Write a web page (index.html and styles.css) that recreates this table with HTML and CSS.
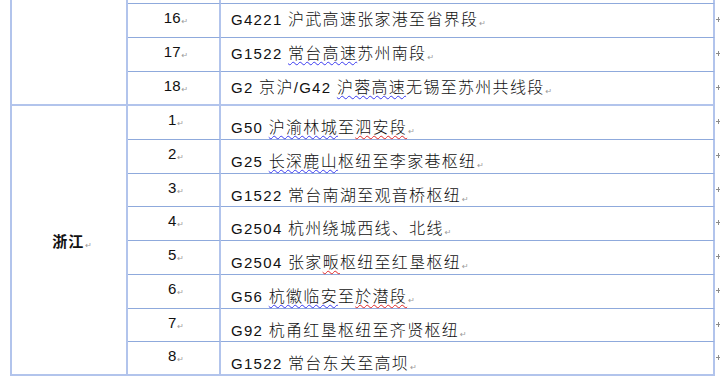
FILE: index.html
```html
<!DOCTYPE html>
<html lang="zh">
<head>
<meta charset="utf-8">
<link rel="stylesheet" href="styles.css">
</head>
<body>
<div class="page">
<table class="grid">
  <colgroup>
    <col class="c-prov"><col class="c-num"><col class="c-name"><col class="c-end">
  </colgroup>
  <tbody>
    <tr class="r-js r-hidden">
      <td class="prov" rowspan="4"></td>
      <td class="num"></td>
      <td class="name"></td>
      <td class="end"><span class="em"></span></td>
    </tr>
    <tr class="r-js">
      <td class="num">16<span class="pm">↵</span></td>
      <td class="name"><span class="en">G4221 </span>沪武高速张家港至省界段<span class="pm">↵</span></td>
      <td class="end"><span class="em"></span></td>
    </tr>
    <tr class="r-js">
      <td class="num">17<span class="pm">↵</span></td>
      <td class="name"><span class="en">G1522 </span><span class="wb">常台高速</span>苏州南段<span class="pm">↵</span></td>
      <td class="end"><span class="em"></span></td>
    </tr>
    <tr class="r-js r-last">
      <td class="num">18<span class="pm">↵</span></td>
      <td class="name"><span class="en">G2 </span>京沪<span class="en">/G42 </span><span class="wb">沪蓉高速</span>无锡至苏州共线段<span class="pm">↵</span></td>
      <td class="end"><span class="em"></span></td>
    </tr>
    <tr class="r-zj">
      <td class="prov prov-zj" rowspan="8">浙江<span class="pm">↵</span></td>
      <td class="num">1<span class="pm">↵</span></td>
      <td class="name"><span class="en">G50 </span><span class="wb">沪渝林城</span>至<span class="wr">泗安段</span><span class="pm">↵</span></td>
      <td class="end"><span class="em"></span></td>
    </tr>
    <tr class="r-zj">
      <td class="num">2<span class="pm">↵</span></td>
      <td class="name"><span class="en">G25 </span><span class="wb">长深鹿山</span>枢纽至李家巷枢纽<span class="pm">↵</span></td>
      <td class="end"><span class="em"></span></td>
    </tr>
    <tr class="r-zj">
      <td class="num">3<span class="pm">↵</span></td>
      <td class="name"><span class="en">G1522 </span>常台南湖至观音桥枢纽<span class="pm">↵</span></td>
      <td class="end"><span class="em"></span></td>
    </tr>
    <tr class="r-zj">
      <td class="num">4<span class="pm">↵</span></td>
      <td class="name"><span class="en">G2504 </span>杭州绕城西线、北线<span class="pm">↵</span></td>
      <td class="end"><span class="em"></span></td>
    </tr>
    <tr class="r-zj">
      <td class="num">5<span class="pm">↵</span></td>
      <td class="name"><span class="en">G2504 </span>张家<span class="wr">畈</span>枢纽至红垦枢纽<span class="pm">↵</span></td>
      <td class="end"><span class="em"></span></td>
    </tr>
    <tr class="r-zj">
      <td class="num">6<span class="pm">↵</span></td>
      <td class="name"><span class="en">G56 </span><span class="wb">杭徽临安</span>至<span class="wr">於潜段</span><span class="pm">↵</span></td>
      <td class="end"><span class="em"></span></td>
    </tr>
    <tr class="r-zj">
      <td class="num">7<span class="pm">↵</span></td>
      <td class="name"><span class="en">G92 </span>杭甬红垦枢纽至齐贤枢纽<span class="pm">↵</span></td>
      <td class="end"><span class="em"></span></td>
    </tr>
    <tr class="r-zj r-bottom">
      <td class="num">8<span class="pm">↵</span></td>
      <td class="name"><span class="en">G1522 </span>常台东关至高坝<span class="pm">↵</span></td>
      <td class="end"><span class="em"></span></td>
    </tr>
  </tbody>
</table>
</div>
</body>
</html>
```

FILE: styles.css
```css
html, body {
  margin: 0;
  padding: 0;
  background: #ffffff;
  overflow: hidden;
}

.page {
  width: 720px;
  height: 380px;
  overflow: hidden;
  padding-left: 10px;
  box-sizing: border-box;
}

.grid {
  margin-top: -30px;
  border-collapse: separate;
  border-spacing: 0;
  table-layout: fixed;
  width: 712px;
  font-family: "Liberation Sans", "Noto Sans CJK SC", sans-serif;
  font-size: 15px;
  color: #111111;
}

.c-prov { width: 118px; }
.c-num { width: 93px; }
.c-name { width: 494px; }
.c-end { width: 7px; }

.grid td {
  box-sizing: border-box;
  padding: 0;
  vertical-align: top;
  line-height: 18px;
  white-space: nowrap;
  border-bottom: 1px solid #8faadc;
}

.grid td.prov {
  border-left: 2px solid #b2c4ec;
  border-right: 2px solid #b2c4ec;
  border-bottom: 2px solid #b2c4ec;
}

.grid td.num,
.grid td.name {
  border-right: 2px solid #b2c4ec;
}

.grid td.end {
  border-bottom: none;
  padding-top: 13px;
  padding-left: 1px;
  line-height: 0;
}

.r-js { height: 34px; }
.r-zj { height: 33.75px; }

.r-last td.num,
.r-last td.name,
.r-bottom td.num,
.r-bottom td.name {
  border-bottom: 2px solid #b2c4ec;
}

.grid td.num {
  text-align: center;
  padding-left: 5px;
  font-family: "Liberation Sans", sans-serif;
}

.r-js td.num,
.r-js td.name {
  padding-top: 5px;
}

.r-zj td.num {
  padding-top: 5px;
}

.r-zj td.name {
  padding-top: 11px;
}

.grid td.name {
  padding-left: 10px;
  letter-spacing: 1.3px;
  font-family: "Noto Sans CJK SC", "Liberation Sans", sans-serif;
  font-size: 16px;
  font-weight: 300;
}

.en {
  font-family: "Liberation Sans", sans-serif;
  font-size: 15px;
  font-weight: 400;
}

.grid td.prov-zj {
  vertical-align: middle;
  text-align: center;
  font-family: "Noto Sans CJK SC", sans-serif;
  font-weight: 700;
  font-size: 15px;
  letter-spacing: 1px;
  padding-left: 6px;
  padding-top: 2px;
}

.pm {
  font-family: "DejaVu Sans", sans-serif;
  font-size: 8px;
  line-height: 0;
  font-weight: 400;
  color: #9a9a9a;
  letter-spacing: 0;
  margin-left: 1px;
  vertical-align: -1px;
}

.wb {
  text-decoration: underline wavy #3a3af0;
  text-decoration-thickness: 1px;
  text-underline-offset: 2px;
}

.wr {
  text-decoration: underline wavy #e02828;
  text-decoration-thickness: 1px;
  text-underline-offset: 2px;
}

.em {
  display: inline-block;
  width: 5px;
  height: 5px;
  background:
    linear-gradient(#8c8c8c, #8c8c8c) center / 5px 1px no-repeat,
    linear-gradient(#8c8c8c, #8c8c8c) center / 1px 5px no-repeat;
}
```
